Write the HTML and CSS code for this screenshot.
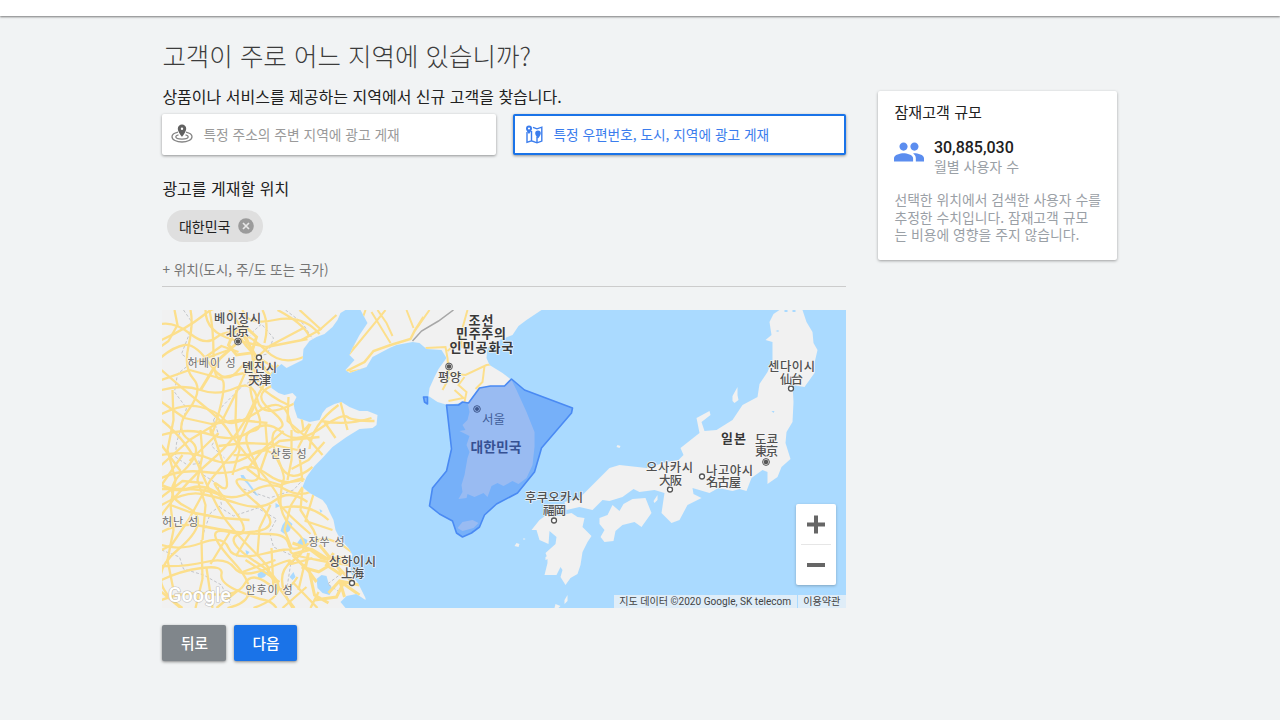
FILE: index.html
```html
<!DOCTYPE html>
<html lang="ko">
<head>
<meta charset="utf-8">
<title>고객 지역 설정</title>
<link rel="stylesheet" href="styles.css">
</head>
<body>
<header class="topbar"></header>
<div class="layout">
  <main class="main">
    <h1 class="title">고객이 주로 어느 지역에 있습니까?</h1>
    <p class="lead">상품이나 서비스를 제공하는 지역에서 신규 고객을 찾습니다.</p>
    <div class="options">
      <button class="option">
        <svg class="option-icon" width="22" height="20" viewBox="0 0 22 20">
          <g fill="none" stroke="#858585" stroke-width="1.3"><path d="M7 8.200C3.500 9 1 10.600 1 12.800 1 15.800 5.500 18 11 18s10-2.200 10-5.200c0-2.200-2.500-3.800-6-4.600"/><path d="M7.500 10.800c-1.600.4-2.700 1.100-2.700 2 0 1.300 2.800 2.300 6.200 2.300s6.200-1 6.200-2.300c0-.9-1.100-1.600-2.700-2"/></g>
          <path d="M11 .5a4.200 4.200 0 0 0-4.200 4.200C6.800 7.900 11 12.800 11 12.800s4.200-4.900 4.200-8.100A4.200 4.200 0 0 0 11 .5zm0 5.400a1.200 1.200 0 1 1 0-2.400 1.200 1.200 0 0 1 0 2.400z" fill="#616161"/>
        </svg>
        <span>특정 주소의 주변 지역에 광고 게재</span>
      </button>
      <button class="option selected">
        <svg class="option-icon" width="18" height="19" viewBox="0 0 18 19">
          <path d="M2 7v10.300l4.500-1.500 5.500 2 4.800-1.700V2.200L12 3.800 8 2.300M6.500 6v9.800M12 12v5.800" fill="none" stroke="#3b7ded" stroke-width="1.400"/>
          <path d="M4 .5A3 3 0 0 0 1 3.500C1 5.800 4 9 4 9s3-3.200 3-5.500a3 3 0 0 0-3-3zM4 4.600a1.100 1.100 0 1 1 0-2.200 1.100 1.100 0 0 1 0 2.200zM13 5.500a2.800 2.800 0 0 0-2.800 2.800c0 2.200 2.800 5.200 2.800 5.200s2.800-3 2.800-5.200A2.800 2.800 0 0 0 13 5.500z" fill="#3b7ded"/>
        </svg>
        <span>특정 우편번호, 도시, 지역에 광고 게재</span>
      </button>
    </div>
    <h2 class="subtitle">광고를 게재할 위치</h2>
    <div class="chip"><span>대한민국</span>
      <svg width="16" height="16" viewBox="0 0 16 16"><circle cx="8" cy="8" r="7.800" fill="#9b9b9b"/><path d="M5 5l6 6M11 5l-6 6" stroke="#e8e8e8" stroke-width="1.700"/></svg>
    </div>
    <div class="location-field">+ 위치(도시, 주/도 또는 국가)</div>
    <div class="map">
      <svg class="map-art" width="684" height="298" viewBox="162.500 310 684 298">
        <defs>
          <path id="china" d="M162 310H346L341 313 338 320 333 327 325 334 317 337 310 341 304 349 303 360 295 364 287 368 282 364 274 370 270 377 272 388 279 393 285 395 293 393 297 397 294 403 295 409 298 418 310 422 320 420 323 413 327 408 335 404 342 402 350 407 360 411 368 411 378 415 377 425 373 428 360 429 347 437 333 447 322 459 315 466 307 477 303 487 310 493 323 500 327 505 330 512 334 520 336 530 340 538 349 548 353 555 350 563 352 574 359 584 366 598 366 600 357 594 347 596 341 602 346 608H162z"/>
          <path id="korea" d="M361 310L368 323 360 335 353 348 350 355 355 360 346 370 350 373 367 367 373 357 390 348 397 345 413 342 420 343 427 349 442 350 447 358 439 369 435 377 430 388 429 396 438 402 448 405 468 402 470 412 468 420 463 425 466 430 460 431 470 436 467 445 470 452 468 458 465 475 462 485 463 492 459 499 467 498 468 494 475 497 484 493 488 497 492 486 498 483 504 486 513 481 519 484 527 478 533 465 535 447 535 432 527 412 517 390 512 380 503 373 490 365 487 358 488 348 500 340 513 335 519 326 527 320 542 310z"/>
          <clipPath id="land"><use href="#china"/><use href="#korea"/></clipPath>
        </defs>
        <rect x="162" y="310" width="685" height="298" fill="#aadaff"/>
        <g fill="#f1f1f1">
          <use href="#china"/><use href="#korea"/>
          <path d="M458 528l5-6 10-2 6 3-5 5-11 3z"/>
          <path d="M780 310H803L807 322 813 332 814 343 818 350 815 363 815 373 805 387 793 385 794 402 793 422 787 432 786 443 791 459 782 467 778 477 768 484 768 472 763 470 752 478 747 491 740 489 733 491 719 488 710 493 693 488 694 494 702 498 688 505 680 520 672 523 662 513 665 493 655 490 640 492 634 489 623 497 610 501 603 500 593 510 580 507 567 510 565 502 580 498 593 485 610 468 620 465 647 468 667 462 679 460 684 455 681 448 700 433 697 418 710 411 711 415 702 422 705 431 717 430 733 420 743 405 758 397 760 384 768 372 773 360 773 342 766 340 772 335 770 322 774 314z"/>
          <path d="M540 520l8-6 10 2 14-3 6 4 7 1-2 9 9 9-4 6-5 10-2 13-3 9-7 4-5 7-5-8 2-7-2-3-4 8-12 0 3-12 0-5-2-5 10-9 1-7-7-6-1 13-9-4-3-10-5 0z"/>
          <path d="M600 518l8-3 5-10 7 6 4-7 9-5 13-1 6 15-10 14-7-5-12 3-7 6-2 10-9 1-4-5 4-7-5-6z"/>
          <path d="M654 501l4-6 0 5-3 3zM733 401l0-5 5-9 0 8 1 5-4 3zM517 543l3 1-1 3-4-1zM524 538l2 1-2 1zM565 600l3-5 0 6-3 3zM556 604l5 2-2 2h-4zM546 557l8-5-3 6-5 2zM618 445l3 1-1 2-3-1z"/>
        </g>
        <g fill="#aadaff"><path d="M241 475l3 0 4 6 6 8 5 7-3-1-8-11-6-6zM276 503l5 3-5 2zM283 525l4-6 6 5-3 7-5 3-4-3zM297 544l5-7 6 3-2 8-7-1zM258 574l4-3 7 1-4 5-6 2zM317 579l5-4 5 1 2 7 4 6-3 6-7-2-5-5zM290 577l4-5 2 5-3 3zM246 550l4 2-3 4zM236 554l3 1-2 2zM320 509l3 2-2 2zM776 331l3-1 0 2zM772 411l3 0-1 2zM785 310h3v2h-3zM793 310h3v2h-3z"/></g>
        <g clip-path="url(#land)" fill="none">
          <g stroke="#c3c5c9" stroke-width="1" stroke-dasharray="3 2">
            <path d="M184 310l9 13-4 13-7 18 11 8-15 12-3 18 12 16-5 18-5 17-1 14 12 8 14-2"/>
            <path d="M214 420l9-14 18-18 17-12 12-3M214 420l5 14-7 12 13 12M286 310l17 13 10 16M252 333l10-9 12 14-6 16-14 3-8-14zM162 550l18 7 4 12 20 6 18 10 9 20M204 533l7-20 11-8-4-21-14-9-5-15M220 507l14 9 24-8 19 11-7 13 4 15 24 11M244 489l26 9 24-8 10-11M308 545l-17 20-4 26M340 592l-12-8 16-12"/>
          </g>
          <g stroke="#fcdf8c" stroke-width="2.300" stroke-linejoin="round">
            <path d="M162 324Q176 322 191 334T216 338 239 333 267 351 304 357"/>
            <path d="M162 340Q188 328 203 316T222 310M162 357Q174 347 185 345T211 365 239 370 259 382"/>
            <path d="M191 310Q194 324 189 346T194 379 189 410 190 440 183 472 187 507 178 550 183 608"/>
            <path d="M210 310Q214 329 214 354T221 379 220 410 211 431 222 459 220 486 232 507 229 532 234 562 228 608"/>
            <path d="M230 310Q244 329 250 345T252 376 257 410 253 431 254 459 246 480 256 502 251 532 258 563 254 608"/>
            <path d="M162 390Q184 384 201 390T236 388 258 400 296 403M162 414Q184 403 201 407T225 420 258 412 290 419 310 424"/>
            <path d="M162 435Q189 427 212 435T251 431 282 432 320 429 348 417 375 421M162 455Q190 450 211 459T251 455 280 464 313 467"/>
            <path d="M162 478Q181 469 205 472T241 469 269 475 305 479M162 489H182Q207 489 221 495T253 491 285 489 311 492M162 505Q186 491 202 494T240 504 276 500 308 502"/>
            <path d="M162 532Q181 522 202 526T237 532 269 534 289 544 310 543 352 552M162 545Q180 551 202 543T229 548 263 554 291 551 318 560 354 565"/>
            <path d="M162 566Q185 567 206 562T235 568 269 568 290 562 313 558M162 580Q180 571 202 568T222 574 239 591 265 600 277 608M162 600Q184 591 211 594T245 584 269 584 298 577"/>
            <path d="M239 333Q246 351 269 364T272 386 271 410 279 429 277 455 284 480 281 500 297 532 293 561 293 608"/>
            <path d="M162 370Q181 387 202 404T229 431 258 468 279 500 311 534"/>
            <path d="M162 420Q189 442 201 470T221 512 251 548 269 570 295 608M162 515Q184 484 211 461T251 410 279 365"/>
            <path d="M162 465L190 440 223 420 239 388 249 365 270 346 304 328M206 310Q206 333 235 340L267 347 308 339M243 310Q247 326 275 320T320 334M263 310Q270 324 265 343M278 310Q305 324 310 337M300 310L322 330"/>
            <path d="M302 340L320 330 337 315M251 378Q270 397 289 405M289 397L288 421 309 439 323 455M311 424L299 447 303 482M310 449Q312 425 339 405M325 422L336 438M341 402L348 430M322 421Q347 426 372 418"/>
            <path d="M234 455Q261 457 280 441L320 437M257 401L247 424 236 450 211 480 189 520 172 545 162 550M284 431L264 449 248 469 261 479 281 485 303 478"/>
            <path d="M303 487L301 510 314 530 319 542M303 487L291 506 285 530 292 548M314 494L306 521 333 530M281 508Q309 502 329 520M230 533L211 564M251 532L237 555M202 540L203 579M271 505L260 528 258 554M219 433L190 461M196 362L229 350M162 445L181 471M183 455L162 485"/>
            <path d="M162 592L181 608M203 579L196 608M207 568L213 608M239 590L217 608M294 583L318 608M311 608L319 592M283 608L307 587"/>
            <path d="M173 390L174 420 168 450 176 480 171 505 174 530 168 560 174 590M201 430L203 455 198 480 206 505 203 540M162 380L190 370 220 378 250 372M237 390L236 420 240 450 233 475M162 402L185 418 212 424 240 420 268 423M175 310L178 325 169 341 162 346M203 359L222 346 239 352M162 497L183 481 204 483M171 505L190 512 222 518 250 520"/>
            <path d="M266 425L268 450 261 470M292 430L292 460 288 480M219 446L245 443 270 444 298 450M325 442L309 460 292 469M300 405L304 430M243 572L276 560M246 560L280 582M272 548L274 590M305 564L299 590"/>
          </g>
          <g stroke="#fcdf8c" stroke-width="3">
            <path d="M234 333l10-8 13 12-5 16-15 2-8-10zM240 329l18 30 18 24M242 339l-22 20-19 31M162 485Q178 493 192 488T223 497"/>
            <path d="M293 543l17 6 12 9 26 4M294 554l18-5 16 10 18-2M309 553l-3 14 11 15M334 553l-7 12 15 10M293 555l17 17 5 23 14 8M319 572l15-9 18 18M329 593l11-12 20 14M340 580l5 17M340 581l20 4M315 600l22-3 7-14M302 567l18 5M320 545l22 27"/>
            <path d="M347 371l18-9 9-11 17-6 20-6 4-8 9-14M350 372l18-3" stroke-width="2.500"/>
            <path d="M378 310l9 13 6 13M407 310l7 18M430 310l-12 17M386 310L349 355M366 310l-15 43M372 312L391 343" stroke-width="2"/>
          </g>
          <g stroke="#fcdf8c" stroke-width="2"><path d="M426 348l20-1 2 11 1 15 17 2 21-10 9-1 11 9M485 366l-2 16-7 7M450 377l-7 13M465 377l-6 8 8 7-2 10M468 310l-7 25 2 13M455 390l9 8-15 3M448 351l9-8 15 1"/></g>
          <path d="M413 341l9-10 17-10 15-11" stroke="#a7a7a7" stroke-width="1.500"/>
        </g>
        <g fill="#4285f4" fill-opacity=".5" stroke="#4a8af3" stroke-width="1.600" stroke-linejoin="round">
          <path d="M512 379L525 390 573 408 572 413 542 448 540 455 535 472 518 493 497 504 485 515 480 527 472 533 463 537 457 533 453 521 440 514 430 506 433 488 447 471 452 449 447 405 459 405 463 402 469 403 480 388 491 386 505 386z"/>
          <path d="M424 397l4 0 0 7-3-2z"/>
        </g>
        <g fill="#fff" stroke="#555" stroke-width="1.300"><circle cx="259.500" cy="357.500" r="2.500"/><circle cx="352.500" cy="583" r="2.500"/><circle cx="554.500" cy="520.500" r="2.500"/><circle cx="791.500" cy="388.500" r="2.500"/><circle cx="670.500" cy="489.500" r="2.500"/><circle cx="702.500" cy="476.500" r="2.500"/></g>
        <g fill="#555"><g stroke="#555" fill="#eee"><circle cx="238.500" cy="341.500" r="3.400"/><circle cx="449.500" cy="366.500" r="3.400"/><circle cx="766.500" cy="462" r="3.400"/></g><circle cx="238.500" cy="341.500" r="2.300"/><circle cx="449.500" cy="366.500" r="2.300"/><circle cx="766.500" cy="462" r="2.300"/><g fill="#3d568c"><circle cx="477.500" cy="409" r="2"/><circle cx="477.500" cy="409" r="3.300" fill="none" stroke="#3d568c"/></g></g>
        <g class="city">
          <text x="238" y="322.500" textLength="47">베이징시</text><text x="238" y="335.500" textLength="23">北京</text>
          <text x="260" y="372" textLength="35">톈진시</text><text x="260" y="385" textLength="23">天津</text>
          <text x="353" y="565.500" textLength="47">상하이시</text><text x="353" y="578" textLength="23">上海</text>
          <text x="450" y="382" textLength="23">평양</text>
          <text x="554.500" y="501.500" textLength="58">후쿠오카시</text><text x="555" y="514.500" textLength="23">福岡</text>
          <text x="792" y="371" textLength="47">센다이시</text><text x="792" y="383.500" textLength="23">仙台</text>
          <text x="767" y="443.500" textLength="23">도쿄</text><text x="767" y="456" textLength="23">東京</text>
          <text x="670" y="472" textLength="47">오사카시</text><text x="671" y="484.500" textLength="23">大阪</text>
          <text x="730" y="474.500" textLength="47">나고야시</text><text x="724" y="487" textLength="35">名古屋</text>
        </g>
        <g class="province">
          <text x="212" y="367" textLength="48">허베이 성</text><text x="289" y="458" textLength="36">산둥 성</text><text x="180.500" y="526" textLength="36">허난 성</text><text x="327" y="546" textLength="36">장쑤 성</text><text x="269.500" y="594" textLength="47">안후이 성</text>
        </g>
        <g class="country">
          <text x="481.500" y="324.500" textLength="25">조선</text><text x="481.500" y="338" textLength="50">민주주의</text><text x="482" y="351.500" textLength="64">인민공화국</text><text x="734" y="443" textLength="25">일본</text>
        </g>
        <text class="korea-name" x="496.500" y="452" textLength="51">대한민국</text>
        <text class="seoul" x="494" y="424" textLength="23">서울</text>
        <text class="logo" x="168.500" y="602" textLength="63" lengthAdjust="spacingAndGlyphs">Google</text>
      </svg>
      <div class="zoom-control">
        <svg width="40" height="40" viewBox="0 0 40 40"><path d="M11 20.500h18M20 11.500v18" stroke="#666" stroke-width="4"/></svg>
        <svg width="40" height="40" viewBox="0 0 40 40"><path d="M11 20.500h18" stroke="#666" stroke-width="4"/></svg>
      </div>
      <div class="attribution"><span>지도 데이터 ©2020 Google, SK telecom</span><span>이용약관</span></div>
    </div>
    <div class="actions"><button class="btn back">뒤로</button><button class="btn next">다음</button></div>
  </main>
  <aside class="card">
    <h3 class="card-title">잠재고객 규모</h3>
    <div class="stat">
      <svg width="30" height="20" viewBox="1 5 22 14" fill="#5b8def"><path d="M16 11c1.660 0 2.990-1.340 2.990-3S17.660 5 16 5s-3 1.340-3 3 1.340 3 3 3zm-8 0c1.660 0 2.990-1.340 2.990-3S9.660 5 8 5 5 6.340 5 8s1.340 3 3 3zm0 2c-2.330 0-7 1.170-7 3.500V19h14v-2.500c0-2.330-4.670-3.500-7-3.500zm8 0c-.29 0-.62.020-.97.050 1.160.84 1.970 1.970 1.970 3.450V19h6v-2.500c0-2.330-4.670-3.500-7-3.500z"/></svg>
      <div><div class="number">30,885,030</div><div class="number-label">월별 사용자 수</div></div>
    </div>
    <p class="card-note">선택한 위치에서 검색한 사용자 수를<br>추정한 수치입니다. 잠재고객 규모<br>는 비용에 영향을 주지 않습니다.</p>
  </aside>
</div>
</body>
</html>
```
FILE: styles.css
```css
* { box-sizing: border-box; }
body { margin: 0; height: 720px; overflow: hidden; background: #f1f3f4; color: #212121; font-family: "Noto Sans CJK KR", sans-serif; font-size: 14px; }
h1, h2, h3, p { margin: 0; font-weight: 400; }
button { font: inherit; border: 0; }
.topbar { height: 16px; background: #fff; box-shadow: 0 1px 2px rgba(0,0,0,.5); }
.layout { display: flex; align-items: flex-start; gap: 32px; padding-left: 162.4px; }
.main { width: 684px; }
.title { padding-top: 20px; height: 66px; font-size: 25.5px; line-height: 38px; font-weight: 300; color: #3c3c3c; white-space: nowrap; }
.lead { height: 32px; font-size: 16px; line-height: 28px; }
.options { display: flex; gap: 17px; }
.option { flex: 1 1 0; min-width: 0; height: 41px; display: flex; align-items: center; padding: 0 9px 1px; background: #fff; color: #9a9a9a; border-radius: 2px; box-shadow: 0 1px 3px rgba(0,0,0,.4); text-align: left; white-space: nowrap; }
.option span { font-size: 13.75px; line-height: 20px; padding-bottom: 1px; }
.option-icon { margin-right: 10px; flex: none; }
.option.selected { flex-basis: 0; padding: 0 10px; border: 2px solid #1a73e8; color: #3b7ded; }
.option.selected span { font-size: 13.7px; }
.option:first-child { flex: none; width: 334px; }
.subtitle { margin-top: 19px; font-size: 16px; line-height: 28px; }
.chip { display: flex; align-items: center; gap: 8px; width: 96px; height: 32px; margin: 8px 0 0 4.5px; padding-left: 12px; border-radius: 16px; background: #dfdfdf; white-space: nowrap; }
.chip span { line-height: 20px; padding-bottom: 1px; }
.chip svg { flex: none; }
.location-field { height: 34px; margin-top: 11px; line-height: 33px; border-bottom: 1px solid #ccc; color: #757575; font-size: 13.6px; }
.map { position: relative; height: 298px; margin-top: 23px; overflow: hidden; }
.map-art { display: block; }
.map-art text { text-anchor: middle; paint-order: stroke; stroke: #f7f7f7; stroke-opacity: .8; stroke-width: 1.6px; stroke-linejoin: round; font-family: "Noto Sans CJK KR", sans-serif; }
.city { font-size: 12.3px; fill: #505050; font-weight: 500; }
.province { font-size: 11px; fill: #6c6c6c; }
.country { font-size: 13px; font-weight: 700; fill: #383838; }
.map-art .korea-name { font-size: 13.8px; font-weight: 700; fill: #355193; stroke: #9fbdf3; stroke-width: 1px; }
.map-art .seoul { font-size: 12.5px; fill: #405d99; stroke: none; }
.map-art .logo { font-family: Roboto, sans-serif; font-size: 20px; font-weight: 500; text-anchor: start; fill: #fff; stroke: #aaa; stroke-width: 1.2px; stroke-opacity: .7; }
.zoom-control { position: absolute; right: 10px; bottom: 23px; width: 40px; height: 81px; background: #fff; border-radius: 2px; box-shadow: 0 1px 3px rgba(0,0,0,.25); }
.zoom-control svg { display: block; }
.zoom-control svg + svg { background: linear-gradient(#e6e6e6, #e6e6e6) center top / 30px 1px no-repeat; height: 41px; }
.attribution { position: absolute; right: 0; bottom: 0; display: flex; gap: 1px; height: 13px; font: 10.1px/13px Roboto, "Noto Sans CJK KR", sans-serif; color: #444; white-space: nowrap; }
.attribution span { background: rgba(245,245,245,.7); padding: 0 6px 0 5px; }
.actions { display: flex; gap: 8px; margin-top: 17px; }
.btn { height: 36px; width: 64px; padding: 0 0 2px; border-radius: 2px; color: #fff; font-size: 14.7px; font-weight: 500; box-shadow: 0 1px 3px rgba(0,0,0,.45); }
.back { background: #80868b; }
.next { background: #1a73e8; width: 63px; }
.card { width: 239px; height: 169px; margin-top: 75px; padding: 11px 16px; background: #fff; border-radius: 2px; box-shadow: 0 1px 3px rgba(0,0,0,.35); white-space: nowrap; }
.card-title { font-size: 15.1px; line-height: 20px; height: 20px; margin-top: -1px; }
.stat { display: flex; gap: 9.5px; margin-top: 17px; align-items: flex-start; }
.stat svg { margin-top: 4px; }
.number { font: 500 16px/19px Roboto, sans-serif; }
.number-label { color: #9aa0a6; line-height: 19px; }
.card-note { margin-top: 15px; font-size: 13.85px; line-height: 17.7px; color: #9aa0a6; }
```
